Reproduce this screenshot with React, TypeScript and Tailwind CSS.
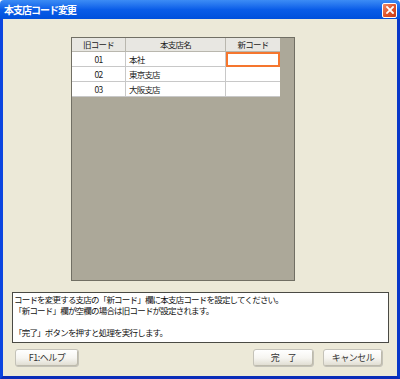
import React from "react";

const font = { fontFamily: '"Noto Sans CJK JP", "Noto Sans", sans-serif' };

const rows = [
  { code: "01", name: "本社" },
  { code: "02", name: "東京支店" },
  { code: "03", name: "大阪支店" },
];

function Btn({ label, w }: { label: string; w: string }) {
  return (
    <div
      className={`${w} h-[18px] flex items-center justify-center rounded-[3px] border border-[#C4C2B8] bg-gradient-to-b from-[#FFFFFF] via-[#F6F5F1] to-[#DEDBCF] text-[9px] text-[#333] tracking-[-0.5px] shadow-[inset_-1px_-1px_0_#BDBAAC]`}
    >
      {label}
    </div>
  );
}

export default function App() {
  return (
    <div className="w-[400px] h-[379px] flex flex-col select-none" style={font}>
      {/* title bar */}
      <div className="h-[19px] shrink-0 flex items-center justify-between pl-[4px] pr-[3px] bg-gradient-to-b from-[#3C8CF5] via-[#0A5DE8] to-[#0050DC] rounded-t-[4px]">
        <span className="text-white font-bold text-[10px] tracking-[-1px] leading-none">本支店コード変更</span>
        <div className="w-[15px] h-[15px] mt-[1px] rounded-[2px] border border-white bg-gradient-to-br from-[#EE8A66] via-[#E0552C] to-[#C63C18] flex items-center justify-center">
          <svg width="8" height="8" viewBox="0 0 8 8">
            <path d="M1 1 L7 7 M7 1 L1 7" stroke="white" strokeWidth="1.8" strokeLinecap="square" />
          </svg>
        </div>
      </div>
      {/* body */}
      <div className="flex-1 flex flex-col bg-[#ECE9D8] border-l-[3px] border-r-[3px] border-b-[3px] border-l-[#0B45E0] border-r-[#0837C8] border-b-[#0A2CB8]">
        {/* grid */}
        <div className="ml-[68px] mt-[18px] w-[224px] h-[244px] bg-[#ACA899] border border-[#716F64]">
          <div className="grid grid-cols-[54px_100px_54px] text-[8.5px] tracking-[-0.8px] text-[#222] leading-none">
            <div className="h-[14px] flex items-center justify-center bg-[#E8E7E2] border-r border-b border-[#B9B7AE]">旧コード</div>
            <div className="h-[14px] flex items-center justify-center bg-[#E8E7E2] border-r border-b border-[#B9B7AE]">本支店名</div>
            <div className="h-[14px] flex items-center justify-center bg-[#E8E7E2] border-b border-[#B9B7AE]">新コード</div>
            {rows.map((r, i) => (
              <React.Fragment key={r.code}>
                <div className="h-[15px] flex items-center justify-center bg-white border-r border-b border-[#C8C8C8]">{r.code}</div>
                <div className="h-[15px] flex items-center pl-[3px] bg-white border-r border-b border-[#C8C8C8]">{r.name}</div>
                {i === 0 ? (
                  <div className="h-[15px] bg-white border-2 border-[#F5762E]" />
                ) : (
                  <div className="h-[15px] bg-white border-b border-[#C8C8C8]" />
                )}
              </React.Fragment>
            ))}
          </div>
        </div>
        {/* memo */}
        <div className="ml-[9px] mt-[11px] w-[377px] h-[51px] bg-white border border-[#4A4A44] pl-[1px] pt-[1px] text-[8.5px] tracking-[-0.8px] leading-[11px] text-[#111]">
          <div>コードを変更する支店の「新コード」欄に本支店コードを設定してください。</div>
          <div>「新コード」欄が空欄の場合は旧コードが設定されます。</div>
          <div>&nbsp;</div>
          <div>「完了」ボタンを押すと処理を実行します。</div>
        </div>
        {/* buttons */}
        <div className="mt-[6px] flex items-center pl-[12px] pr-[14px]">
          <Btn label="F1:ヘルプ" w="w-[64px]" />
          <div className="flex-1" />
          <Btn label="完　了" w="w-[61px]" />
          <div className="w-[9px]" />
          <Btn label="キャンセル" w="w-[60px]" />
        </div>
      </div>
    </div>
  );
}
